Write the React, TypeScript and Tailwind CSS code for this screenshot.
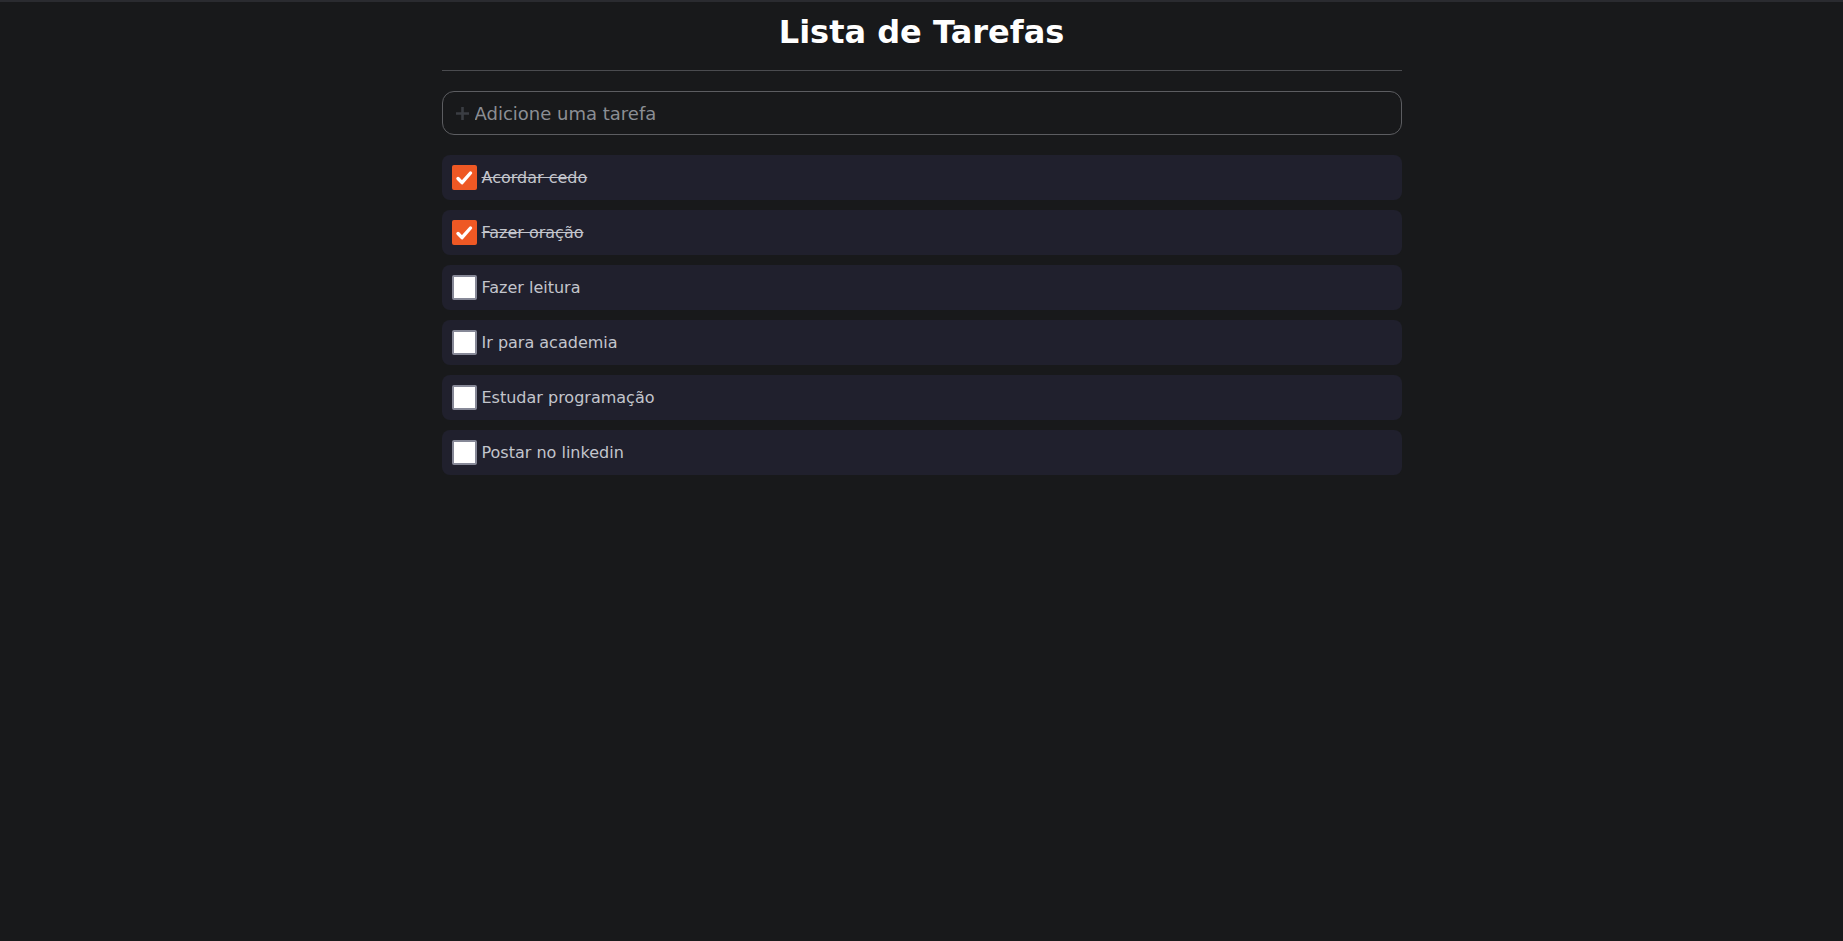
import { useState } from "react";

type Task = { id: number; title: string; done: boolean };

const initialTasks: Task[] = [
  { id: 1, title: "Acordar cedo", done: true },
  { id: 2, title: "Fazer oração", done: true },
  { id: 3, title: "Fazer leitura", done: false },
  { id: 4, title: "Ir para academia", done: false },
  { id: 5, title: "Estudar programação", done: false },
  { id: 6, title: "Postar no linkedin", done: false },
];

const PlusIcon = () => (
  <svg width="15" height="15" viewBox="0 0 15 15" className="shrink-0">
    <path d="M7.5 1v13M1 7.5h13" stroke="#3a3d43" strokeWidth="2.6" />
  </svg>
);

const CheckIcon = () => (
  <svg width="20" height="20" viewBox="0 0 20 20">
    <path
      d="M4 10.5l4 4.2L16.5 5"
      fill="none"
      stroke="white"
      strokeWidth="3.4"
      strokeLinecap="round"
      strokeLinejoin="round"
    />
  </svg>
);

const App = () => {
  const [tasks, setTasks] = useState<Task[]>(initialTasks);
  const [newTask, setNewTask] = useState("");

  const toggle = (id: number) =>
    setTasks((list) =>
      list.map((t) => (t.id === id ? { ...t, done: !t.done } : t))
    );

  const handleSubmit = (event: React.FormEvent) => {
    event.preventDefault();
    if (!newTask.trim()) return;
    setTasks((list) => [
      ...list,
      { id: Date.now(), title: newTask.trim(), done: false },
    ]);
    setNewTask("");
  };

  return (
    <main className="min-h-screen border-t-2 border-[#2a2b30] bg-[#18191b] font-['DejaVu_Sans',sans-serif]">
      <section className="mx-auto w-[960px] pt-[11px]">
        <h1 className="text-center text-[32px] font-bold leading-[38px] text-white">
          Lista de Tarefas
        </h1>
        <hr className="mt-[19px] border-0 border-t border-[#4a4b4f]" />

        <form onSubmit={handleSubmit} className="mt-5">
          <label className="flex h-[44px] items-center gap-[5px] rounded-xl border border-[#5c5d61] px-3">
            <PlusIcon />
            <input
              type="text"
              value={newTask}
              onChange={(e) => setNewTask(e.target.value)}
              placeholder="Adicione uma tarefa"
              className="w-full bg-transparent text-[18px] text-[#d0d0d0] outline-none placeholder:text-[#8b8e94]"
            />
          </label>
        </form>

        <ul className="mt-[20px] flex flex-col gap-[10px]">
          {tasks.map((task) => (
            <li
              key={task.id}
              className="flex h-[45px] items-center gap-[5px] rounded-lg bg-[#20202d] px-[10px]"
            >
              <button
                type="button"
                onClick={() => toggle(task.id)}
                className={
                  task.done
                    ? "flex h-[25px] w-[25px] items-center justify-center rounded-[2px] bg-[#ee5824]"
                    : "h-[25px] w-[25px] rounded-[2px] border-2 border-[#868897] bg-white"
                }
              >
                {task.done && <CheckIcon />}
              </button>
              <span
                className={
                  task.done
                    ? "text-base text-[#c3c5cc] line-through"
                    : "text-base text-[#c3c5cc]"
                }
              >
                {task.title}
              </span>
            </li>
          ))}
        </ul>
      </section>
    </main>
  );
};

export default App;
